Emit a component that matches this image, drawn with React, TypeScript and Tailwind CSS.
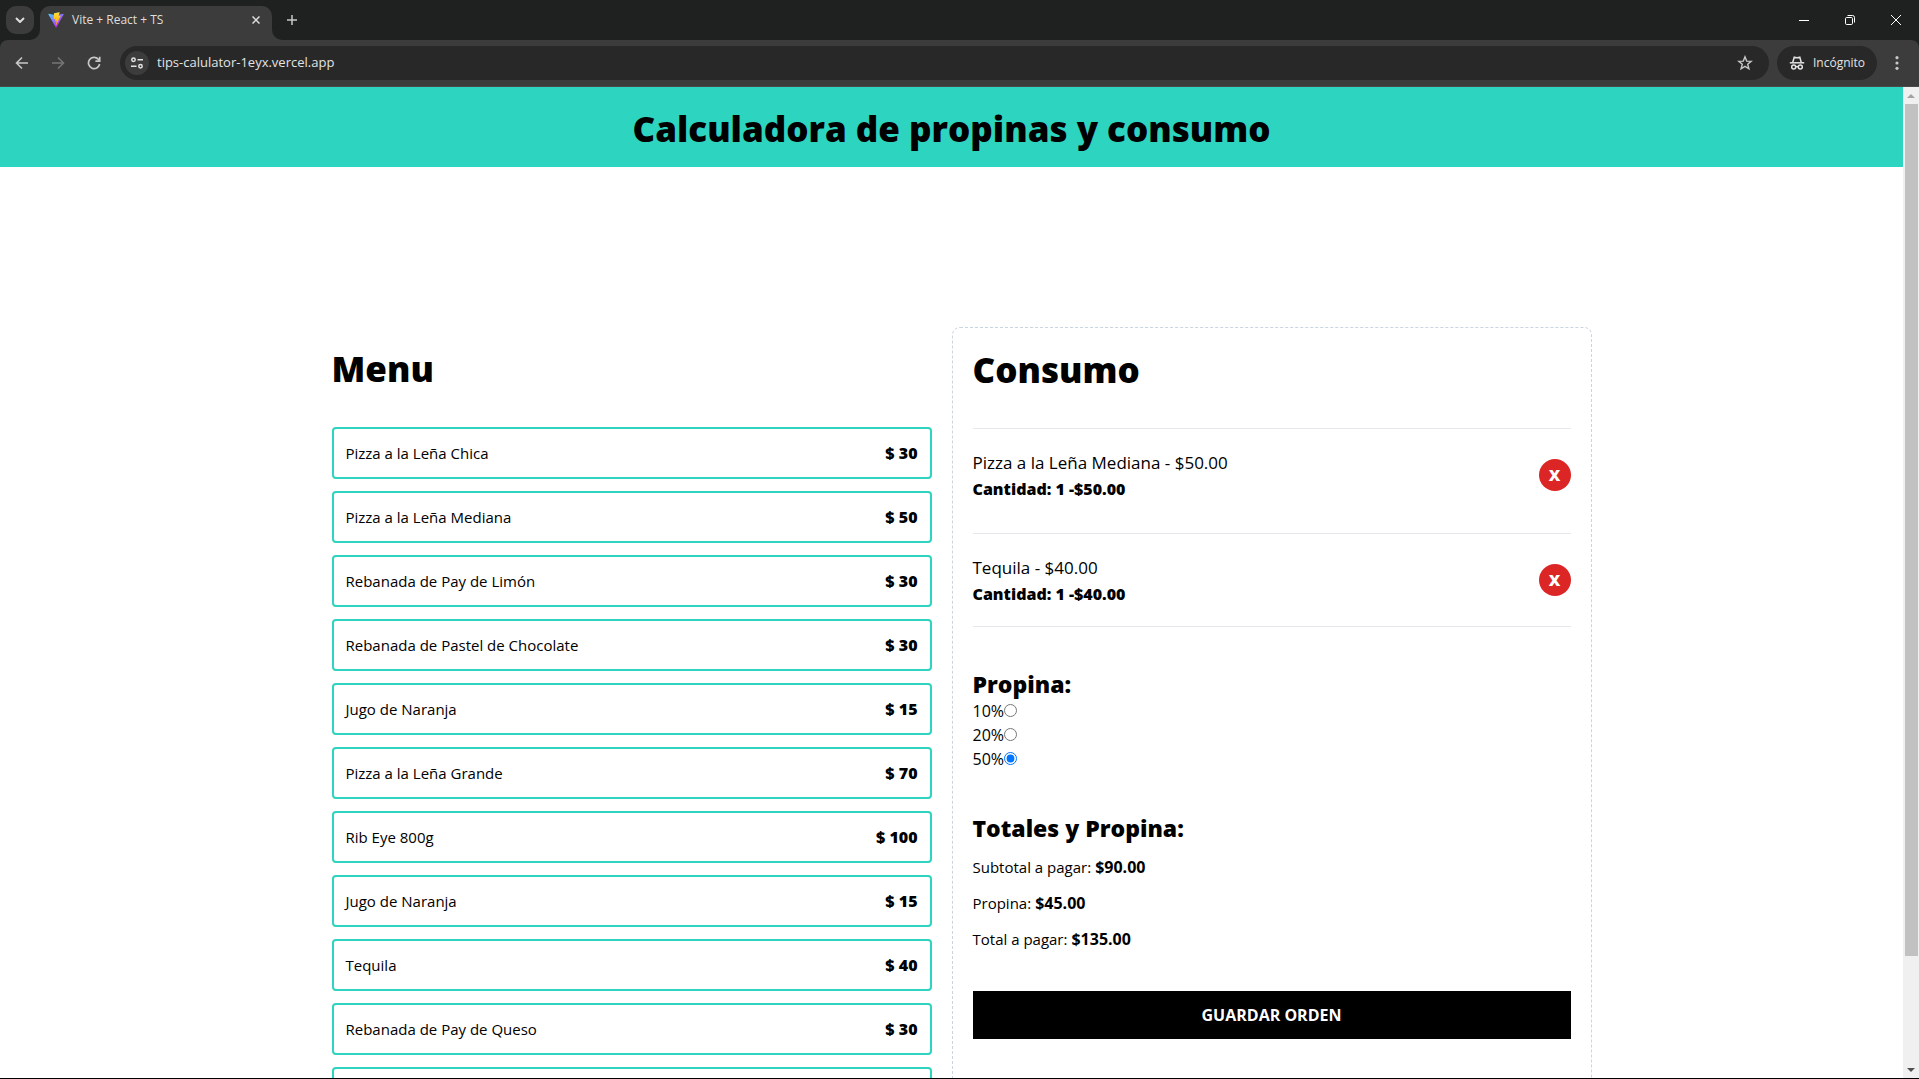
import { useState } from "react";

const menu = [
  { id: 1, name: "Pizza a la Leña Chica", price: 30 },
  { id: 2, name: "Pizza a la Leña Mediana", price: 50 },
  { id: 3, name: "Rebanada de Pay de Limón", price: 30 },
  { id: 4, name: "Rebanada de Pastel de Chocolate", price: 30 },
  { id: 5, name: "Jugo de Naranja", price: 15 },
  { id: 6, name: "Pizza a la Leña Grande", price: 70 },
  { id: 7, name: "Rib Eye 800g", price: 100 },
  { id: 8, name: "Jugo de Naranja", price: 15 },
  { id: 9, name: "Tequila", price: 40 },
  { id: 10, name: "Rebanada de Pay de Queso", price: 30 },
];

const order = [
  { id: 2, name: "Pizza a la Leña Mediana", price: 50, quantity: 1 },
  { id: 9, name: "Tequila", price: 40, quantity: 1 },
];

const tips = [
  { id: "tip-10", label: "10%", value: 0.1 },
  { id: "tip-20", label: "20%", value: 0.2 },
  { id: "tip-50", label: "50%", value: 0.5 },
];

const money = (n: number) => `$${n.toFixed(2)}`;

function ViteLogo() {
  return (
    <svg viewBox="0 0 410 404" className="size-4 shrink-0" aria-hidden="true">
      <defs>
        <linearGradient id="vite-a" x1="6" y1="33" x2="235" y2="344" gradientUnits="userSpaceOnUse">
          <stop stopColor="#41D1FF" />
          <stop offset="1" stopColor="#BD34FE" />
        </linearGradient>
        <linearGradient id="vite-b" x1="194" y1="9" x2="236" y2="292" gradientUnits="userSpaceOnUse">
          <stop stopColor="#FFEA83" />
          <stop offset="0.083" stopColor="#FFDD35" />
          <stop offset="1" stopColor="#FFA800" />
        </linearGradient>
      </defs>
      <path
        fill="url(#vite-a)"
        d="M399.6 59.5 215.6 388.5c-3.8 6.8-13.5 6.8-17.4.1L10.6 59.6c-4.200-7.400 2.100-16.400 10.500-14.900l184.200 32.900c1.200.2 2.400.2 3.500 0l180.300-32.900c8.400-1.500 14.700 7.400 10.500 14.800Z"
      />
      <path
        fill="url(#vite-b)"
        d="M293 1.600 156.800 28.300c-2.200.4-3.900 2.300-4 4.600l-8.400 141.500c-.2 3.300 2.900 5.900 6.100 5.200l37.900-8.800c3.500-.8 6.700 2.300 6 5.900l-11.300 55.100c-.8 3.700 2.700 6.900 6.300 5.800l23.400-7.100c3.600-1.100 7.100 2.100 6.300 5.800l-17.900 86.600c-1.100 5.400 6.100 8.400 9.100 3.700l2-3.100 111-221.400c1.900-3.700-1.300-7.900-5.400-7.100l-39 7.500c-3.700.7-6.800-2.700-5.800-6.300l25.500-88.300c1-3.600-2.100-7-5.600-6.300Z"
      />
    </svg>
  );
}

function TabStrip() {
  return (
    <div className="flex h-10 items-center bg-[#1f2120] text-[#dedede]">
      <button aria-label="Buscar pestañas" className="ml-1.5 flex size-7 items-center justify-center rounded-[10px] bg-[#3c3c3c]">
        <svg viewBox="0 0 10 6" className="h-1.5 w-2.5" fill="none" stroke="currentColor" strokeWidth="2">
          <path d="m1 1 4 4 4-4" />
        </svg>
      </button>
      <div className="relative ml-1.5 flex h-[34px] w-[232px] items-center self-end rounded-t-[10px] bg-[#3c3c3c] pr-2 pb-1.5 pl-2">
        <svg viewBox="0 0 10 10" className="absolute bottom-0 -left-2.5 size-2.5" aria-hidden="true">
          <path d="M10 0v10H0A10 10 0 0 0 10 0Z" fill="#3c3c3c" />
        </svg>
        <svg viewBox="0 0 10 10" className="absolute -right-2.5 bottom-0 size-2.5" aria-hidden="true">
          <path d="M0 0v10h10A10 10 0 0 1 0 0Z" fill="#3c3c3c" />
        </svg>
        <ViteLogo />
        <span className="ml-2 flex-1 text-xs">Vite + React + TS</span>
        <button aria-label="Cerrar pestaña" className="flex size-4 items-center justify-center">
          <svg viewBox="0 0 8 8" className="size-2" fill="none" stroke="currentColor" strokeWidth="1.500">
            <path d="m.5.5 7 7m0-7-7 7" />
          </svg>
        </button>
      </div>
      <button aria-label="Nueva pestaña" className="ml-3 flex size-4 items-center justify-center">
        <svg viewBox="0 0 10 10" className="size-2.5" fill="none" stroke="#c7c7c7" strokeWidth="1.500">
          <path d="M5 0v10M0 5h10" />
        </svg>
      </button>
      <div className="ml-auto flex text-white">
        <button aria-label="Minimizar" className="flex h-10 w-[46px] items-center justify-center">
          <svg viewBox="0 0 10 10" className="size-2.5" stroke="currentColor">
            <path d="M0 5.500h10" />
          </svg>
        </button>
        <button aria-label="Restaurar" className="flex h-10 w-[46px] items-center justify-center">
          <svg viewBox="0 0 10 10" className="size-2.5" fill="none" stroke="currentColor">
            <rect x="0.500" y="2.500" width="7" height="7" rx="1.200" />
            <path d="M2.500.5h5a2 2 0 0 1 2 2v5" />
          </svg>
        </button>
        <button aria-label="Cerrar" className="flex h-10 w-[46px] items-center justify-center">
          <svg viewBox="0 0 10 10" className="size-2.5" fill="none" stroke="currentColor">
            <path d="m0 0 10 10M10 0 0 10" />
          </svg>
        </button>
      </div>
    </div>
  );
}

function Toolbar() {
  return (
    <div className="bg-[#1f2120]">
      <div className="flex h-[47px] items-center rounded-t-lg border-b border-[#4a4a4a] bg-[#3c3c3c] text-[#c7c7c7]">
        <button aria-label="Atrás" className="ml-3.5 flex size-4 items-center justify-center">
          <svg viewBox="0 0 14 14" className="size-3.5" fill="none" stroke="currentColor" strokeWidth="1.600">
            <path d="M13 7H2M7 1.500 1.500 7 7 12.500" />
          </svg>
        </button>
        <button aria-label="Adelante" className="ml-5 flex size-4 items-center justify-center text-[#757575]">
          <svg viewBox="0 0 14 14" className="size-3.5" fill="none" stroke="currentColor" strokeWidth="1.600">
            <path d="M1 7h11M7 1.500 12.500 7 7 12.500" />
          </svg>
        </button>
        <button aria-label="Recargar" className="ml-5 flex size-4 items-center justify-center">
          <svg viewBox="0 0 14 14" className="size-3.5" fill="none" stroke="currentColor" strokeWidth="1.700">
            <path d="M12.600 8A5.600 5.600 0 1 1 11.200 3.200L12.500 4.600" />
            <path d="M12.700.8v4.300H8.400" />
          </svg>
        </button>
        <div className="ml-[18px] flex h-[34px] flex-1 items-center rounded-full bg-[#282828] pr-4 pl-[5px]">
          <button aria-label="Información del sitio" className="flex size-6 items-center justify-center rounded-full bg-[#3c3c3c] text-[#e3e3e3]">
            <svg viewBox="0 0 12 12" className="size-3" fill="none" stroke="currentColor" strokeWidth="1.500">
              <circle cx="2.500" cy="2.800" r="1.700" />
              <path d="M6.500 2.800H12M0 9.200h5.500" />
              <circle cx="9.500" cy="9.200" r="1.700" />
            </svg>
          </button>
          <input
            aria-label="Dirección"
            defaultValue="tips-calulator-1eyx.vercel.app"
            className="ml-2 min-w-0 flex-1 bg-transparent text-[13px] text-[#e3e3e3] outline-none"
          />
          <button aria-label="Añadir a marcadores" className="flex size-4 items-center justify-center">
            <svg viewBox="0 0 16 16" className="size-4" fill="none" stroke="currentColor" strokeWidth="1.400">
              <path d="m8 1.800 1.700 4.300 4.500.3-3.500 2.900 1.200 4.500L8 11.300l-3.900 2.500 1.200-4.500-3.500-2.900 4.500-.3Z" />
            </svg>
          </button>
        </div>
        <button className="ml-2 flex h-[34px] w-[100px] items-center gap-2 rounded-full bg-[#282828] pl-3 text-xs text-[#e3e3e3]">
          <svg viewBox="0 0 16 16" className="size-4 shrink-0" fill="none" stroke="currentColor" strokeWidth="1.500">
            <path d="M.8 7.800h14.400" />
            <path d="M3.700 7.500 5.200 2.300c1.800.7 3.800.7 5.600 0l1.500 5.200" />
            <circle cx="4.700" cy="12" r="2" />
            <circle cx="11.300" cy="12" r="2" />
            <path d="M6.700 11.800c.8-.4 1.800-.4 2.600 0" />
          </svg>
          Incógnito
        </button>
        <button aria-label="Menú" className="mr-3.5 ml-3 flex size-4 items-center justify-center">
          <svg viewBox="0 0 4 14" className="h-3.5 w-1" fill="currentColor">
            <circle cx="2" cy="1.700" r="1.600" />
            <circle cx="2" cy="7" r="1.600" />
            <circle cx="2" cy="12.300" r="1.600" />
          </svg>
        </button>
      </div>
    </div>
  );
}

function Scrollbar() {
  return (
    <div className="flex w-4 shrink-0 flex-col items-center bg-[#f0f0f0]" aria-hidden="true">
      <div className="flex h-[17px] items-center">
        <svg viewBox="0 0 8 4" className="h-1 w-2" fill="#a3a3a3">
          <path d="m4 0 4 4H0Z" />
        </svg>
      </div>
      <div className="w-full flex-1 px-px">
        <div className="ml-px h-[89%] bg-[#c1c1c1]" />
      </div>
      <div className="flex h-[17px] items-center">
        <svg viewBox="0 0 8 4" className="h-1 w-2" fill="#505050">
          <path d="m4 4 4-4H0Z" />
        </svg>
      </div>
    </div>
  );
}

export default function App() {
  const [tip, setTip] = useState(0.5);
  const subtotal = order.reduce((sum, item) => sum + item.price * item.quantity, 0);

  return (
    <div className="flex h-screen flex-col overflow-hidden border-b border-black bg-white font-['Segoe_UI','Open_Sans',sans-serif] text-black">
      <TabStrip />
      <Toolbar />
      <div className="flex min-h-0 flex-1">
        <div className="flex-1 overflow-hidden">
          <header className="bg-[#2dd4bf] pt-5 pb-4">
            <h1 className="text-center text-[35px] leading-[44px] font-black">Calculadora de propinas y consumo</h1>
          </header>
          <main className="mx-auto grid max-w-7xl grid-cols-2 py-40">
            <section className="p-5">
              <h2 className="text-[35px] leading-[44px] font-black">Menu</h2>
              <div className="mt-9 space-y-3">
                {menu.map((item) => (
                  <button key={item.id} className="flex w-full justify-between rounded border-2 border-[#2dd4bf] p-3">
                    <p className="text-[15px] leading-6">{item.name}</p>
                    <p className="font-black">$ {item.price}</p>
                  </button>
                ))}
                <button aria-label="Más platillos" className="h-13 w-full rounded border-2 border-[#2dd4bf]" />
              </div>
            </section>

            <section className="rounded-lg border border-dashed border-slate-300 p-5">
              <h2 className="text-[35px] leading-[44px] font-black">Consumo</h2>
              <ul className="mt-9 space-y-3">
                {order.map((item) => (
                  <li key={item.id} className="flex items-center justify-between border-t border-gray-200 py-5 last:border-b">
                    <div>
                      <p className="text-[17px] leading-7">
                        {item.name} - {money(item.price)}
                      </p>
                      <p className="font-black">
                        Cantidad: {item.quantity} -{money(item.price * item.quantity)}
                      </p>
                    </div>
                    <button aria-label={`Eliminar ${item.name}`} className="size-8 rounded-full bg-[#dc2626] font-black text-white">
                      X
                    </button>
                  </li>
                ))}
              </ul>

              <form className="mt-[42px]">
                <h3 className="text-[23px] leading-[30px] font-black">Propina:</h3>
                {tips.map((t) => (
                  <div key={t.id} className="flex items-center">
                    <label htmlFor={t.id}>{t.label}</label>
                    <input
                      id={t.id}
                      type="radio"
                      name="tip"
                      checked={tip === t.value}
                      onChange={() => setTip(t.value)}
                      className="mb-0.5 accent-[#0075ff]"
                    />
                  </div>
                ))}
              </form>

              <div className="mt-[42px] space-y-3 text-[15px] leading-6">
                <h3 className="text-[23px] leading-[30px] font-black">Totales y Propina:</h3>
                <p className="flex items-baseline gap-1">
                  Subtotal a pagar: <span className="text-base font-bold">{money(subtotal)}</span>
                </p>
                <p className="flex items-baseline gap-1">
                  Propina: <span className="text-base font-bold">{money(subtotal * tip)}</span>
                </p>
                <p className="flex items-baseline gap-1">
                  Total a pagar: <span className="text-base font-bold">{money(subtotal * (1 + tip))}</span>
                </p>
              </div>

              <button className="mt-10 w-full bg-black p-3 font-bold text-white uppercase">Guardar orden</button>
            </section>
          </main>
        </div>
        <Scrollbar />
      </div>
    </div>
  );
}
